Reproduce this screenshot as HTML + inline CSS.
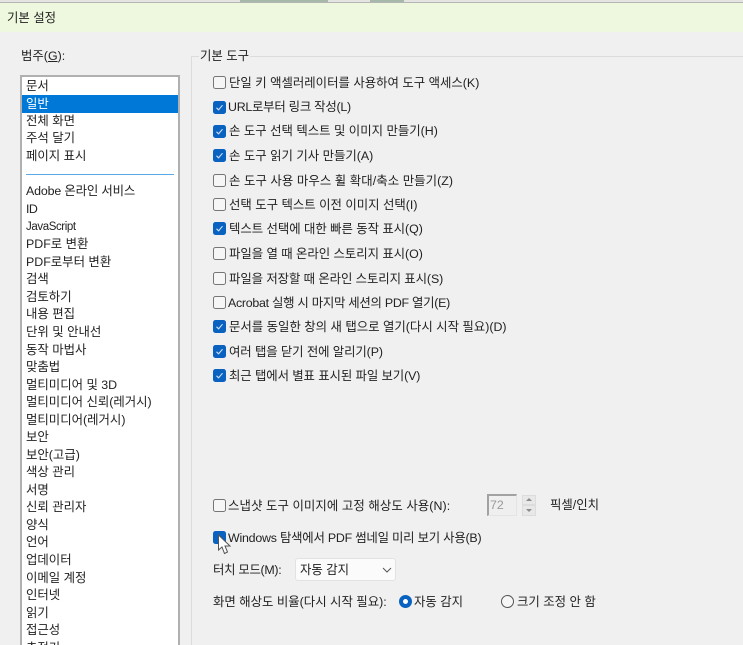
<!DOCTYPE html>
<html lang="ko"><head><meta charset="utf-8"><style>
html,body{margin:0;padding:0}
body{width:743px;height:645px;overflow:hidden;background:#f0f0f0;position:relative;font-family:"Liberation Sans","Noto Sans CJK KR",sans-serif;font-size:12.4px;color:#222}
.t{position:absolute;white-space:nowrap;line-height:18px;height:18px;filter:blur(.3px)}
.c{position:absolute;left:213px;width:11px;height:11px;border-radius:2.5px;border:1px solid #767676;background:#f6f6f6}
.c.on{background:#0a62c0;border-color:#0a62c0}
.c.on svg{position:absolute;left:1px;top:1px}
#list{position:absolute;left:20px;top:75px;width:160px;height:570px;border:2px solid #b0b0b0;border-bottom:0;background:#fff;box-sizing:border-box;overflow:hidden}
#list .t{left:4px}
</style></head><body>
<div style="position:absolute;left:0;top:0;width:743px;height:3px;background:#e4e4e2"></div>
<div style="position:absolute;left:240px;top:0;width:88px;height:2px;background:#a5b8aa"></div>
<div style="position:absolute;left:370px;top:0;width:34px;height:2px;background:#a5b8aa"></div>
<div style="position:absolute;left:0;top:2px;width:743px;height:1px;background:#b5b5b3"></div>
<div style="position:absolute;left:0;top:3px;width:743px;height:29px;background:#eef8de"></div>
<div class="t" style="left:7px;top:9px">기본 설정</div>
<div class="t" style="left:21px;top:47px">범주(<u>G</u>):</div>
<div id="list">
<div style="position:absolute;left:0;top:18px;width:156px;height:18px;background:#0078d7"></div>
<div class="t" style="top:0">문서</div>
<div class="t" style="top:18px;color:#fff">일반</div>
<div class="t" style="top:35px">전체 화면</div>
<div class="t" style="top:52px">주석 달기</div>
<div class="t" style="top:70px">페이지 표시</div>
<div style="position:absolute;left:4px;top:97px;width:148px;height:1px;background:#5aa8e6"></div>
<div class="t" style="top:105px;letter-spacing:-.15px">Adobe 온라인 서비스</div>
<div class="t" style="top:123px;letter-spacing:-.6px">ID</div>
<div class="t" style="top:141px;font-size:11.5px;letter-spacing:-.4px">JavaScript</div>
<div class="t" style="top:158px">PDF로 변환</div>
<div class="t" style="top:176px">PDF로부터 변환</div>
<div class="t" style="top:193px">검색</div>
<div class="t" style="top:211px">검토하기</div>
<div class="t" style="top:228px">내용 편집</div>
<div class="t" style="top:246px">단위 및 안내선</div>
<div class="t" style="top:264px">동작 마법사</div>
<div class="t" style="top:281px">맞춤법</div>
<div class="t" style="top:299px">멀티미디어 및 3D</div>
<div class="t" style="top:316px">멀티미디어 신뢰(레거시)</div>
<div class="t" style="top:334px">멀티미디어(레거시)</div>
<div class="t" style="top:351px">보안</div>
<div class="t" style="top:369px">보안(고급)</div>
<div class="t" style="top:386px">색상 관리</div>
<div class="t" style="top:404px">서명</div>
<div class="t" style="top:421px">신뢰 관리자</div>
<div class="t" style="top:439px">양식</div>
<div class="t" style="top:456px">언어</div>
<div class="t" style="top:474px">업데이터</div>
<div class="t" style="top:492px">이메일 계정</div>
<div class="t" style="top:509px">인터넷</div>
<div class="t" style="top:527px">읽기</div>
<div class="t" style="top:544px">접근성</div>
<div class="t" style="top:562px">추적기</div>
</div>
<div style="position:absolute;left:191px;top:56px;width:8px;height:1px;background:#dcdcdc"></div>
<div style="position:absolute;left:191px;top:56px;width:1px;height:589px;background:#dcdcdc"></div>
<div style="position:absolute;left:250px;top:56px;width:493px;height:1px;background:#dcdcdc"></div>
<div class="t" style="left:200px;top:47px">기본 도구</div>

<div class="c" style="top:76px"></div><div class="t" style="left:229px;top:74px">단일 키 액셀러레이터를 사용하여 도구 액세스(K)</div>
<div class="c on" style="top:101px"><svg width="9" height="9" viewBox="0 0 9 9"><path d="M1.5 4.8L3.6 6.8L7.5 2.2" fill="none" stroke="#cfe3f7" stroke-width="1.1"/></svg></div><div class="t" style="left:228px;top:98px;letter-spacing:-.25px">URL로부터 링크 작성(L)</div>
<div class="c on" style="top:125px"><svg width="9" height="9" viewBox="0 0 9 9"><path d="M1.5 4.8L3.6 6.8L7.5 2.2" fill="none" stroke="#cfe3f7" stroke-width="1.1"/></svg></div><div class="t" style="left:229px;top:122px">손 도구 선택 텍스트 및 이미지 만들기(H)</div>
<div class="c on" style="top:149px"><svg width="9" height="9" viewBox="0 0 9 9"><path d="M1.5 4.8L3.6 6.8L7.5 2.2" fill="none" stroke="#cfe3f7" stroke-width="1.1"/></svg></div><div class="t" style="left:229px;top:147px">손 도구 읽기 기사 만들기(A)</div>
<div class="c" style="top:174px"></div><div class="t" style="left:229px;top:172px;letter-spacing:.07px">손 도구 사용 마우스 휠 확대/축소 만들기(Z)</div>
<div class="c" style="top:198px"></div><div class="t" style="left:229px;top:196px">선택 도구 텍스트 이전 이미지 선택(I)</div>
<div class="c on" style="top:222px"><svg width="9" height="9" viewBox="0 0 9 9"><path d="M1.5 4.8L3.6 6.8L7.5 2.2" fill="none" stroke="#cfe3f7" stroke-width="1.1"/></svg></div><div class="t" style="left:229px;top:220px;letter-spacing:-.04px">텍스트 선택에 대한 빠른 동작 표시(Q)</div>
<div class="c" style="top:247px"></div><div class="t" style="left:229px;top:245px;letter-spacing:-.04px">파일을 열 때 온라인 스토리지 표시(O)</div>
<div class="c" style="top:272px"></div><div class="t" style="left:229px;top:270px;letter-spacing:-.08px">파일을 저장할 때 온라인 스토리지 표시(S)</div>
<div class="c" style="top:296px"></div><div class="t" style="left:228px;top:294px;letter-spacing:-.27px">Acrobat 실행 시 마지막 세션의 PDF 열기(E)</div>
<div class="c on" style="top:320px"><svg width="9" height="9" viewBox="0 0 9 9"><path d="M1.5 4.8L3.6 6.8L7.5 2.2" fill="none" stroke="#cfe3f7" stroke-width="1.1"/></svg></div><div class="t" style="left:229px;top:318px">문서를 동일한 창의 새 탭으로 열기(다시 시작 필요)(D)</div>
<div class="c on" style="top:345px"><svg width="9" height="9" viewBox="0 0 9 9"><path d="M1.5 4.8L3.6 6.8L7.5 2.2" fill="none" stroke="#cfe3f7" stroke-width="1.1"/></svg></div><div class="t" style="left:229px;top:343px;letter-spacing:-.1px">여러 탭을 닫기 전에 알리기(P)</div>
<div class="c on" style="top:369px"><svg width="9" height="9" viewBox="0 0 9 9"><path d="M1.5 4.8L3.6 6.8L7.5 2.2" fill="none" stroke="#cfe3f7" stroke-width="1.1"/></svg></div><div class="t" style="left:229px;top:367px;letter-spacing:-.09px">최근 탭에서 별표 표시된 파일 보기(V)</div>

<div class="c" style="top:499px"></div><div class="t" style="left:228px;top:497px;letter-spacing:.08px">스냅샷 도구 이미지에 고정 해상도 사용(N):</div>
<div style="position:absolute;left:487px;top:494px;width:30px;height:22px;border:1px solid #e4e4e4;border-left:2px solid #a2a2a2;border-top:2px solid #a2a2a2;box-sizing:border-box;background:#efefef"></div>
<div class="t" style="left:490px;top:496px;color:#9a9a9a">72</div>
<div style="position:absolute;left:522px;top:495px;width:14px;height:10px;background:#e8e8e8;border:1px solid #dcdcdc;box-sizing:border-box"></div>
<div style="position:absolute;left:522px;top:505px;width:14px;height:11px;background:#e8e8e8;border:1px solid #dcdcdc;box-sizing:border-box"></div>
<div style="position:absolute;left:526px;top:498px;border:3px solid transparent;border-bottom:3px solid #8a8a8a;border-top:0"></div>
<div style="position:absolute;left:526px;top:509px;border:3px solid transparent;border-top:3px solid #8a8a8a;border-bottom:0"></div>
<div class="t" style="left:550px;top:496px">픽셀/인치</div>

<div class="c on" style="top:531px"></div><div class="t" style="left:228px;top:529px;letter-spacing:-.22px">Windows 탐색에서 PDF 썸네일 미리 보기 사용(B)</div>
<svg style="position:absolute;left:217px;top:534px" width="16" height="22" viewBox="0 0 16 22"><path d="M1.5 1L1.5 16L5 13L7.5 19.5L10.5 18L8 12L13 12Z" fill="#fff" stroke="#555" stroke-width="1"/></svg>

<div class="t" style="left:213px;top:561px;letter-spacing:-.3px">터치 모드(M):</div>
<div style="position:absolute;left:295px;top:558px;width:101px;height:23px;background:#fbfbfb;border:1px solid #e2e2e2;box-sizing:border-box;border-radius:3px"></div>
<div class="t" style="left:300px;top:561px">자동 감지</div>
<svg style="position:absolute;left:382px;top:567px" width="10" height="7" viewBox="0 0 10 7"><path d="M1 1L5 5L9 1" fill="none" stroke="#555" stroke-width="1"/></svg>

<div class="t" style="left:213px;top:593px">화면 해상도 비율(다시 시작 필요):</div>
<div style="position:absolute;left:399px;top:595px;width:13px;height:13px;border-radius:50%;box-sizing:border-box;border:4px solid #0a62c0;background:#fff"></div>
<div class="t" style="left:414px;top:593px">자동 감지</div>
<div style="position:absolute;left:501px;top:595px;width:13px;height:13px;border-radius:50%;box-sizing:border-box;border:1px solid #555;background:#f6f6f6"></div>
<div class="t" style="left:517px;top:593px">크기 조정 안 함</div>
</body></html>
